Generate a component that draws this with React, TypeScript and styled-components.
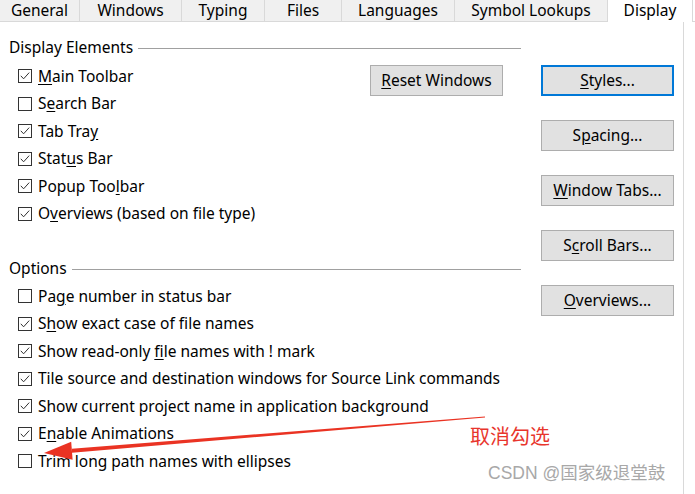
import styled, { createGlobalStyle } from 'styled-components';

const GlobalStyle = createGlobalStyle`
  body {
    margin: 0;
    background: #ffffff;
    font-family: "Noto Sans", "Noto Sans CJK SC", sans-serif;
    color: #000000;
  }
`;

const Page = styled.div`
  position: relative;
  width: 695px;
  height: 494px;
  overflow: hidden;
  background: #ffffff;
`;

const TabBar = styled.div`
  display: flex;
  align-items: flex-end;
  height: 22px;
  border-bottom: 1px solid #d9d9d9;
  box-sizing: border-box;
`;

const Tab = styled.div<{ $w: number; $active?: boolean }>`
  width: ${(p) => p.$w}px;
  box-sizing: border-box;
  height: ${(p) => (p.$active ? 23 : 21)}px;
  margin-bottom: ${(p) => (p.$active ? -1 : 0)}px;
  display: flex;
  justify-content: center;
  align-items: center;
  padding-top: ${(p) => (p.$active ? 1 : 0)}px;
  padding-bottom: ${(p) => (p.$active ? 3 : 2)}px;
  background: ${(p) => (p.$active ? '#ffffff' : '#f0f0f0')};
  border-right: 1px solid #d9d9d9;
  font-size: 15.5px;
  line-height: 18px;
  white-space: nowrap;
`;

const Body = styled.div`
  display: grid;
  grid-template-columns: 512px 133px;
  column-gap: 20px;
  padding-left: 9px;
  height: 472px;
  width: 684px;
  box-sizing: border-box;
  border-right: 1px solid #d9d9d9;
`;

const Column = styled.div`
  display: flex;
  flex-direction: column;
`;

const Legend = styled.div<{ $top: number }>`
  display: flex;
  align-items: center;
  gap: 5px;
  margin-top: ${(p) => p.$top}px;
  height: 20px;
  font-size: 15.5px;
  line-height: 20px;
  white-space: nowrap;

  &::after {
    content: '';
    flex: 1;
    height: 1px;
    margin-top: 2px;
    background: #a0a0a0;
  }
`;

const GroupRow = styled.div<{ $top: number }>`
  display: flex;
  justify-content: space-between;
  align-items: flex-start;
  margin-top: ${(p) => p.$top}px;
`;

const List = styled.div`
  display: flex;
  flex-direction: column;
  padding-left: 9px;
`;

const Row = styled.label`
  display: flex;
  align-items: center;
  gap: 6px;
  height: 27.5px;
  font-size: 15.5px;
  white-space: nowrap;
`;

const Label = styled.span`
  margin-top: -1px;
`;

const Box = styled.span`
  width: 14px;
  height: 14px;
  box-sizing: border-box;
  border: 1px solid #333333;
  background: #ffffff;
  display: flex;
  align-items: center;
  justify-content: center;
`;

const Key = styled.span`
  text-decoration: underline;
  text-underline-offset: 2px;
`;

const Button = styled.div<{ $focused?: boolean }>`
  width: 133px;
  height: 31px;
  box-sizing: border-box;
  display: flex;
  align-items: center;
  justify-content: center;
  padding-bottom: 2px;
  background: #e1e1e1;
  border: ${(p) => (p.$focused ? '2px solid #0078d7' : '1px solid #adadad')};
  font-size: 15.5px;
  white-space: nowrap;
`;

const ResetButton = styled(Button)`
  margin-top: 2.75px;
  margin-right: 18px;
`;

const ButtonStack = styled.div`
  display: flex;
  flex-direction: column;
  gap: 24px;
  padding-top: 43px;
`;

const Overlay = styled.svg`
  position: absolute;
  left: 0;
  top: 0;
  pointer-events: none;
`;

const Note = styled.div`
  position: absolute;
  left: 470px;
  top: 423px;
  font-family: "Noto Sans CJK SC", sans-serif;
  font-size: 20px;
  line-height: 26px;
  color: #e8352c;
`;

const Watermark = styled.div`
  position: absolute;
  left: 488px;
  top: 461px;
  font-family: "Liberation Sans", "Noto Sans CJK SC", sans-serif;
  font-size: 17.5px;
  line-height: 24px;
  color: #a8a8a8;
  white-space: nowrap;
`;

type Item = { pre: string; key?: string; post?: string; checked: boolean };

const display: Item[] = [
  { pre: '', key: 'M', post: 'ain Toolbar', checked: true },
  { pre: 'S', key: 'e', post: 'arch Bar', checked: false },
  { pre: 'Tab Tra', key: 'y', post: '', checked: true },
  { pre: 'Stat', key: 'u', post: 's Bar', checked: true },
  { pre: 'Popup Too', key: 'l', post: 'bar', checked: true },
  { pre: 'O', key: 'v', post: 'erviews (based on file type)', checked: true },
];

const options: Item[] = [
  { pre: 'Pa', key: 'g', post: 'e number in status bar', checked: false },
  { pre: 'S', key: 'h', post: 'ow exact case of file names', checked: true },
  { pre: 'Show read-only ', key: 'f', post: 'ile names with ! mark', checked: true },
  { pre: 'Tile source and destination windows for Source Link commands', checked: true },
  { pre: 'Show current project name in application background', checked: true },
  { pre: 'E', key: 'n', post: 'able Animations', checked: true },
  { pre: 'Trim long path names with ellipses', checked: false },
];

const tabs = [
  { label: 'General', w: 80 },
  { label: 'Windows', w: 102 },
  { label: 'Typing', w: 83 },
  { label: 'Files', w: 77 },
  { label: 'Languages', w: 113 },
  { label: 'Symbol Lookups', w: 153 },
  { label: 'Display', w: 85, active: true },
];

const buttons = [
  { pre: '', key: 'S', post: 'tyles...', focused: true },
  { pre: 'S', key: 'p', post: 'acing...' },
  { pre: '', key: 'W', post: 'indow Tabs...' },
  { pre: 'S', key: 'c', post: 'roll Bars...' },
  { pre: '', key: 'O', post: 'verviews...' },
];

const Check = ({ checked }: { checked: boolean }) => (
  <Box>
    {checked && (
      <svg width="12" height="12" viewBox="0 0 12 12">
        <path d="M1.8 5.8 L4.6 8.8 L10.2 2.6" fill="none" stroke="#333" strokeWidth="1" />
      </svg>
    )}
  </Box>
);

const CheckRow = ({ item }: { item: Item }) => (
  <Row>
    <Check checked={item.checked} />
    <Label>
      {item.pre}
      {item.key && <Key>{item.key}</Key>}
      {item.post}
    </Label>
  </Row>
);

const Arrow = () => (
  <Overlay width="695" height="494" viewBox="0 0 695 494">
    <polygon
      points="72.1,452.7 71.7,448.7 484.96,416.5 485.04,417.5"
      fill="#ea3323"
    />
    <polygon points="44,453 71.2,441.7 72.6,459.7" fill="#ea3323" />
  </Overlay>
);

export default function App() {
  return (
    <Page>
      <GlobalStyle />
      <TabBar>
        {tabs.map((t) => (
          <Tab key={t.label} $w={t.w} $active={t.active}>
            {t.label}
          </Tab>
        ))}
      </TabBar>
      <Body>
        <Column>
          <Legend $top={15}>Display Elements</Legend>
          <GroupRow $top={5.25}>
            <List>
              {display.map((it, i) => (
                <CheckRow key={i} item={it} />
              ))}
            </List>
            <ResetButton>
              <Key>R</Key>eset Windows
            </ResetButton>
          </GroupRow>
          <Legend $top={30.75}>Options</Legend>
          <GroupRow $top={4.25}>
            <List>
              {options.map((it, i) => (
                <CheckRow key={i} item={it} />
              ))}
            </List>
          </GroupRow>
        </Column>
        <ButtonStack>
          {buttons.map((b, i) => (
            <Button key={i} $focused={b.focused}>
              {b.pre}
              <Key>{b.key}</Key>
              {b.post}
            </Button>
          ))}
        </ButtonStack>
      </Body>
      <Arrow />
      <Note>取消勾选</Note>
      <Watermark>CSDN @国家级退堂鼓</Watermark>
    </Page>
  );
}
